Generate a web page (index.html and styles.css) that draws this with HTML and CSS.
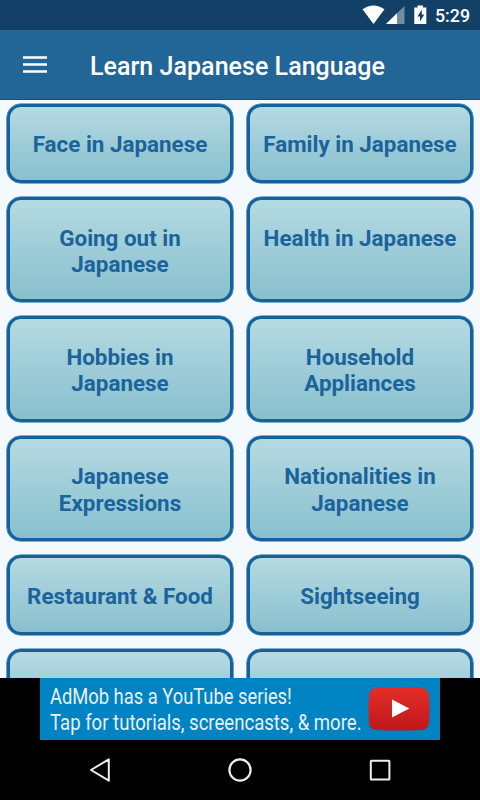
FILE: index.html
```html
<!DOCTYPE html>
<html lang="en">
<head>
  <meta charset="UTF-8" />
  <meta name="viewport" content="width=device-width, initial-scale=1.0"/>
  <title>Learn Japanese Language</title>
  <link rel="stylesheet" href="styles.css">
</head>
<body>
  <div class="status-bar">
    <svg class="status-icons" width="68" height="30" viewBox="0 0 68 30">
      <path d="M0.5 9.3Q11.5 1.5 22.5 9.3L11.5 24Z" fill="#fff"/>
      <path d="M42.500 6V24H24Z" fill="#fff" opacity="0.4"/>
      <path d="M35 13.300V24H24Z" fill="#fff"/>
      <path d="M55.500 5.500h5.500v2h3.300v16.500h-12v-16.500h3.200z" fill="#fff"/>
      <path d="M59.800 9.500l-4.300 7h2.500v5l4.300-7h-2.500z" fill="#134067"/>
    </svg>
    <span class="clock">5:29</span>
  </div>
  <header class="app-bar">
    <button class="menu-button" aria-label="Open menu">
      <svg width="24" height="18" viewBox="0 0 24 18">
        <path d="M0 1.500h24M0 8.500h24M0 15.500h24" stroke="#fff" stroke-width="2.600"/>
      </svg>
    </button>
    <h1 class="app-title">Learn Japanese Language</h1>
  </header>
  <main class="topic-grid">
    <button class="topic">Face in Japanese</button>
    <button class="topic">Family in Japanese</button>
    <button class="topic">Going out in Japanese</button>
    <button class="topic">Health in Japanese</button>
    <button class="topic">Hobbies in Japanese</button>
    <button class="topic">Household Appliances</button>
    <button class="topic">Japanese Expressions</button>
    <button class="topic">Nationalities in Japanese</button>
    <button class="topic">Restaurant &amp; Food</button>
    <button class="topic">Sightseeing</button>
    <button class="topic" aria-label="More topics"></button>
    <button class="topic" aria-label="More topics"></button>
  </main>
  <div class="ad-row">
    <div class="ad-banner">
      <div class="ad-text">
        <div class="ad-line ad-line-one">AdMob has a YouTube series!</div>
        <div class="ad-line ad-line-two">Tap for tutorials, screencasts, &amp; more.</div>
      </div>
      <svg class="play-logo" width="64" height="46" viewBox="0 0 64 46">
        <defs>
          <linearGradient id="playRed" x1="0" y1="0" x2="0" y2="1">
            <stop offset="0" stop-color="#e52d27"/>
            <stop offset="1" stop-color="#bf171d"/>
          </linearGradient>
        </defs>
        <path d="M9 2Q32 0.400 55 2Q61 2.500 62 9Q63.400 23 62 37Q61 43.500 55 44Q32 45.200 9 44Q3 43.500 2 37Q0.600 23 2 9Q3 2.500 9 2Z" fill="url(#playRed)"/>
        <path d="M25 13.500L42.300 22.500L25 31.500Z" fill="#fff"/>
      </svg>
    </div>
  </div>
  <nav class="nav-bar">
    <svg width="24" height="28" viewBox="0 0 24 28">
      <path d="M20.800 3.300V24.700L3 14Z" fill="none" stroke="#eee" stroke-width="2" stroke-linejoin="round"/>
    </svg>
    <svg width="24" height="28" viewBox="0 0 24 28">
      <circle cx="12" cy="14" r="10.600" fill="none" stroke="#eee" stroke-width="2.200"/>
    </svg>
    <svg width="24" height="28" viewBox="0 0 24 28">
      <rect x="2.800" y="4.800" width="18.600" height="18.600" rx="0.500" fill="none" stroke="#eee" stroke-width="2"/>
    </svg>
  </nav>
</body>
</html>
```

FILE: styles.css
```css
* {
  box-sizing: border-box;
}
body {
  margin: 0;
  height: 800px;
  display: flex;
  flex-direction: column;
  overflow: hidden;
  background: #000;
  font-family: Roboto, sans-serif;
}
button {
  border: none;
  background: none;
  padding: 0;
  font-family: inherit;
}
.status-bar {
  flex: none;
  height: 30px;
  padding-right: 10px;
  display: flex;
  justify-content: flex-end;
  align-items: center;
  background: #134067;
  color: #fff;
}
.status-icons {
  margin-right: 5px;
}
.clock {
  font-size: 17.8px;
  font-weight: 500;
  line-height: 30px;
  padding-top: 2px;
}
.app-bar {
  flex: none;
  height: 70px;
  padding: 3px 0 0 23px;
  display: flex;
  align-items: center;
  background: #226698;
  border-bottom: 1px solid #0b4f83;
}
.menu-button {
  width: 24px;
  height: 18px;
  margin: 0 43px 2px 0;
}
.menu-button svg {
  display: block;
}
.app-title {
  margin: 0;
  color: #fff;
  font-size: 25px;
  font-weight: 500;
  letter-spacing: 0.04px;
}
.topic-grid {
  flex: none;
  height: 578px;
  padding: 3.6px 7px 0;
  display: grid;
  grid-template-columns: 1fr 1fr;
  grid-template-rows: 79.4px 105.4px 105.4px 105.4px 79.4px 79.4px;
  gap: 14px;
  overflow: hidden;
  background: #f4f9fd;
}
.topic {
  display: flex;
  justify-content: center;
  align-items: flex-start;
  padding: 24.6px 10px 0;
  border: 3px solid #14629b;
  border-radius: 14px;
  box-shadow: 0 0 0 0.6px #14629b;
  background: linear-gradient(#b5dae1, #9bcbd7 55%, #8ac0ce);
  color: #1b639b;
  font-size: 22.4px;
  font-weight: 700;
  line-height: 26.4px;
  text-align: center;
}
.ad-row {
  flex: none;
  height: 62px;
  display: flex;
  justify-content: center;
}
.ad-banner {
  width: 400px;
  padding: 6px 9px 0 10px;
  display: flex;
  justify-content: space-between;
  background: #0083c3;
}
.ad-text {
  width: 310px;
}
.ad-line {
  color: #e9eff5;
  font-size: 21.5px;
  line-height: 26px;
  white-space: nowrap;
  transform-origin: 0 0;
}
.ad-line-one {
  transform: scaleX(0.853);
}
.ad-line-two {
  transform: scaleX(0.863);
}
.play-logo {
  flex: none;
  margin-top: 1.5px;
}
.nav-bar {
  flex: none;
  height: 60px;
  padding: 0 88px;
  display: flex;
  justify-content: space-between;
  align-items: center;
}
```
